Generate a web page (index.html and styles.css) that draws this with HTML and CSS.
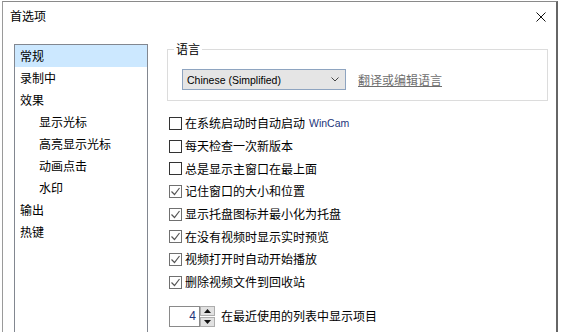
FILE: index.html
```html
<!DOCTYPE html>
<html lang="zh-CN">
<head>
    <meta charset="UTF-8">
    <title>首选项</title>
    <link rel="stylesheet" href="styles.css">
</head>
<body>
    <div class="window">
        <div class="titlebar">
            <span class="title">首选项</span>
            <svg class="close" width="10" height="10" viewBox="0 0 10 10">
                <path d="M0.5 0.5 L9.5 9.5 M9.5 0.5 L0.5 9.5" stroke="#111" stroke-width="1" fill="none"/>
            </svg>
        </div>
        <div class="content">
            <ul class="nav-list">
                <li class="nav-item selected">常规</li>
                <li class="nav-item">录制中</li>
                <li class="nav-item">效果</li>
                <li class="nav-item sub">显示光标</li>
                <li class="nav-item sub">高亮显示光标</li>
                <li class="nav-item sub">动画点击</li>
                <li class="nav-item sub">水印</li>
                <li class="nav-item">输出</li>
                <li class="nav-item">热键</li>
            </ul>
            <div class="panel">
                <fieldset class="group">
                    <legend>语言</legend>
                    <div class="lang-row">
                        <div class="combo">
                            <span>Chinese (Simplified)</span>
                            <svg class="chev" width="8" height="5" viewBox="0 0 8 5">
                                <path d="M0.5 0.5 L4 4 L7.5 0.5" stroke="#444" fill="none"/>
                            </svg>
                        </div>
                        <a class="link">翻译或编辑语言</a>
                    </div>
                </fieldset>
                <div class="options">
                    <div class="opt"><span class="box"></span>在系统启动时自动启动<span class="latin">WinCam</span></div>
                    <div class="opt"><span class="box"></span>每天检查一次新版本</div>
                    <div class="opt"><span class="box"></span>总是显示主窗口在最上面</div>
                    <div class="opt"><span class="box checked"><svg width="11" height="11" viewBox="0 0 11 11"><path d="M1.5 5.5 L4.5 8.5 L9.5 2" stroke="#555" stroke-width="1.2" fill="none"/></svg></span>记住窗口的大小和位置</div>
                    <div class="opt"><span class="box checked"><svg width="11" height="11" viewBox="0 0 11 11"><path d="M1.5 5.5 L4.5 8.5 L9.5 2" stroke="#555" stroke-width="1.2" fill="none"/></svg></span>显示托盘图标并最小化为托盘</div>
                    <div class="opt"><span class="box checked"><svg width="11" height="11" viewBox="0 0 11 11"><path d="M1.5 5.5 L4.5 8.5 L9.5 2" stroke="#555" stroke-width="1.2" fill="none"/></svg></span>在没有视频时显示实时预览</div>
                    <div class="opt"><span class="box checked"><svg width="11" height="11" viewBox="0 0 11 11"><path d="M1.5 5.5 L4.5 8.5 L9.5 2" stroke="#555" stroke-width="1.2" fill="none"/></svg></span>视频打开时自动开始播放</div>
                    <div class="opt"><span class="box checked"><svg width="11" height="11" viewBox="0 0 11 11"><path d="M1.5 5.5 L4.5 8.5 L9.5 2" stroke="#555" stroke-width="1.2" fill="none"/></svg></span>删除视频文件到回收站</div>
                </div>
                <div class="spin-row">
                    <div class="spin-input">4</div>
                    <div class="spin-btns">
                        <div class="spin-btn"><svg width="7" height="4" viewBox="0 0 7 4"><path d="M0 4 L3.5 0 L7 4 Z" fill="#111"/></svg></div>
                        <div class="spin-btn"><svg width="7" height="4" viewBox="0 0 7 4"><path d="M0 0 L3.5 4 L7 0 Z" fill="#111"/></svg></div>
                    </div>
                    <span class="spin-label">在最近使用的列表中显示项目</span>
                </div>
            </div>
        </div>
    </div>
</body>
</html>
```

FILE: styles.css
```css
* {
    margin: 0;
    padding: 0;
    box-sizing: border-box;
}
body {
    background: #fff;
    font-family: "Noto Sans CJK SC", sans-serif;
    font-size: 12px;
    color: #000;
    overflow: hidden;
}
.window {
    margin: 1px 0 0 2px;
    width: 556px;
    height: 331px;
    border-top: 1px solid #8a8a8a;
    border-left: 1px solid #9a9a9a;
    border-right: 2px solid #666;
    overflow: hidden;
}
.titlebar {
    height: 30px;
    display: flex;
    align-items: center;
    justify-content: space-between;
    padding: 0 10px 2px 7px;
}
.title {
    line-height: 16px;
}
.close {
    display: block;
    margin-top: 2px;
}
.content {
    display: flex;
    padding: 9px 0 0 11px;
    gap: 19px;
}
.nav-list {
    list-style: none;
    width: 134px;
    height: 300px;
    margin-top: 3px;
    border: 1px solid #828790;
    flex-shrink: 0;
}
.nav-item {
    height: 22px;
    line-height: 22px;
    padding-left: 5px;
}
.nav-item.sub {
    padding-left: 24px;
}
.nav-item.selected {
    background: #cce8ff;
}
.panel {
    width: 381px;
}
.group {
    border: 1px solid #dcdcdc;
    padding: 0;
}
.group legend {
    margin-left: 6px;
    padding: 0 2px;
    line-height: 16px;
}
.lang-row {
    display: flex;
    align-items: center;
    padding: 12px 14px 10px;
}
.combo {
    width: 164px;
    height: 21px;
    border: 1px solid #8ea4c0;
    background: #e5e5e5;
    display: flex;
    align-items: center;
    justify-content: space-between;
    padding: 0 6px 0 4px;
    font-family: "Liberation Sans", sans-serif;
    font-size: 10.5px;
}
.chev {
    display: block;
}
.link {
    margin-left: 12px;
    color: #6e6e6e;
    text-decoration: underline;
    line-height: 16px;
}
.options {
    margin-top: 11px;
    display: flex;
    flex-direction: column;
}
.opt {
    height: 22.7px;
    display: flex;
    align-items: center;
    padding-left: 2px;
    line-height: 16px;
}
.box {
    width: 13px;
    height: 13px;
    border: 1px solid #333;
    background: #fff;
    margin-right: 3px;
    display: flex;
    align-items: center;
    justify-content: center;
    flex-shrink: 0;
}
.box.checked {
    border-color: #707070;
}
.box svg {
    display: block;
}
.latin {
    font-family: "Liberation Sans", sans-serif;
    font-size: 10.5px;
    margin-left: 4px;
    color: #23357a;
}
.spin-row {
    margin-top: 12px;
    padding-left: 2px;
    display: flex;
    align-items: center;
}
.spin-input {
    width: 31px;
    height: 21px;
    border: 1px solid #8a8a8a;
    text-align: right;
    padding-right: 3px;
    line-height: 19px;
    font-family: "Liberation Sans", sans-serif;
    font-size: 12px;
    color: #23357a;
}
.spin-btns {
    width: 15px;
    height: 21px;
    display: flex;
    flex-direction: column;
    gap: 1px;
}
.spin-btn {
    flex: 1;
    border: 1px solid #adadad;
    background: #e1e1e1;
    display: flex;
    align-items: center;
    justify-content: center;
}
.spin-btn svg {
    display: block;
}
.spin-label {
    margin-left: 6px;
    line-height: 16px;
}
```
